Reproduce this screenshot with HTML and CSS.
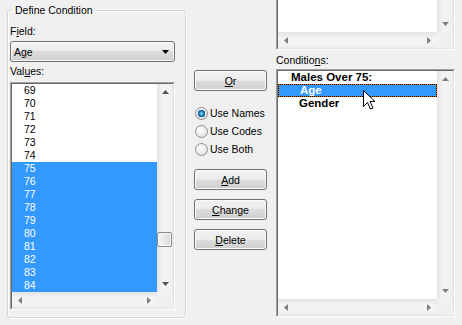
FILE: index.html
```html
<!DOCTYPE html>
<html lang="en">
<head>
    <meta charset="UTF-8">
    <title>Define Condition</title>
    <link rel="stylesheet" href="styles.css">
</head>
<body>
    <div class="dialog">
        <fieldset class="group">
            <legend>Define Condition</legend>
            <label class="caption">F<u>i</u>eld:</label>
            <div class="combo">
                <span>Age</span>
                <svg class="arrow" width="7" height="4"><path d="M0 0h7L3.5 4z" fill="#000"/></svg>
            </div>
            <label class="caption caption-values">Val<u>u</u>es:</label>
            <div class="listbox values">
                <div class="lb-inner">
                    <div class="rows">
                        <div class="row">69</div>
                        <div class="row">70</div>
                        <div class="row">71</div>
                        <div class="row">72</div>
                        <div class="row">73</div>
                        <div class="row">74</div>
                        <div class="row sel">75</div>
                        <div class="row sel">76</div>
                        <div class="row sel">77</div>
                        <div class="row sel">78</div>
                        <div class="row sel">79</div>
                        <div class="row sel">80</div>
                        <div class="row sel">81</div>
                        <div class="row sel">82</div>
                        <div class="row sel">83</div>
                        <div class="row sel">84</div>
                    </div>
                    <div class="vscroll">
                        <div class="sb-btn"><svg width="7" height="4"><path d="M0 4h7L3.5 0z" fill="#505050"/></svg></div>
                        <div class="track"><div class="thumb"></div></div>
                        <div class="sb-btn"><svg width="7" height="4"><path d="M0 0h7L3.5 4z" fill="#505050"/></svg></div>
                    </div>
                    <div class="hscroll">
                        <div class="sb-btn"><svg width="4" height="7"><path d="M4 0v7L0 3.5z" fill="#808080"/></svg></div>
                        <div class="track"></div>
                        <div class="sb-btn"><svg width="4" height="7"><path d="M0 0v7L4 3.5z" fill="#808080"/></svg></div>
                    </div>
                    <div class="corner"></div>
                </div>
            </div>
        </fieldset>

        <div class="actions">
            <button class="btn"><u>O</u>r</button>
            <div class="radios">
                <label class="radio"><span class="radio-dot checked"></span>Use Names</label>
                <label class="radio"><span class="radio-dot"></span>Use Codes</label>
                <label class="radio"><span class="radio-dot"></span>Use Both</label>
            </div>
            <button class="btn btn-add"><u>A</u>dd</button>
            <button class="btn btn-next"><u>C</u>hange</button>
            <button class="btn btn-next"><u>D</u>elete</button>
        </div>

        <div class="side">
            <div class="listbox top-box">
                <div class="lb-inner">
                    <div class="rows"></div>
                    <div class="vscroll">
                        <div class="track"></div>
                        <div class="sb-btn"><svg width="7" height="4"><path d="M0 0h7L3.5 4z" fill="#808080"/></svg></div>
                    </div>
                    <div class="hscroll">
                        <div class="sb-btn"><svg width="4" height="7"><path d="M4 0v7L0 3.5z" fill="#808080"/></svg></div>
                        <div class="track"></div>
                        <div class="sb-btn"><svg width="4" height="7"><path d="M0 0v7L4 3.5z" fill="#808080"/></svg></div>
                    </div>
                    <div class="corner"></div>
                </div>
            </div>

            <label class="caption caption-cond">Conditio<u>n</u>s:</label>
            <div class="listbox conditions">
                <div class="lb-inner">
                    <div class="rows">
                        <div class="tree-row">Males Over 75:</div>
                        <div class="tree-row child sel">Age</div>
                        <div class="tree-row child">Gender</div>
                    </div>
                    <div class="vscroll">
                        <div class="sb-btn"><svg width="7" height="4"><path d="M0 4h7L3.5 0z" fill="#808080"/></svg></div>
                        <div class="track"></div>
                        <div class="sb-btn"><svg width="7" height="4"><path d="M0 0h7L3.5 4z" fill="#808080"/></svg></div>
                    </div>
                    <div class="hscroll">
                        <div class="sb-btn"><svg width="4" height="7"><path d="M4 0v7L0 3.5z" fill="#808080"/></svg></div>
                        <div class="track"></div>
                        <div class="sb-btn"><svg width="4" height="7"><path d="M0 0v7L4 3.5z" fill="#808080"/></svg></div>
                    </div>
                    <div class="corner"></div>
                </div>
                <!-- mouse pointer over the tree -->
                <svg class="pointer" width="13" height="20" viewBox="0 0 13 20">
                    <path d="M0.5 0.5V16.5L4.5 12.5L7.5 19L10 18L7 11.5H12Z" fill="#fff" stroke="#000" stroke-width="1" stroke-linejoin="miter"/>
                </svg>
            </div>
        </div>
    </div>
</body>
</html>
```

FILE: styles.css
```css
* {
    box-sizing: border-box;
}
body {
    margin: 0;
    background: #f0f0f0;
    font-family: "Liberation Sans", Arial, sans-serif;
    font-size: 10.5px;
    color: #000;
}
.dialog {
    display: flex;
    align-items: flex-start;
    height: 325px;
    padding-left: 7px;
    overflow: hidden;
}

/* group box */
.group {
    margin: 4px 0 0;
    padding: 8px 10px 7px 2px;
    width: 179px;
    min-width: 0;
    border: 1px solid #d5d5d5;
    border-radius: 3px;
    box-shadow: inset 1px 1px #fff, 1px 1px #fff;
}
.group legend {
    margin-left: 2px;
    padding: 0 3px;
    line-height: 13px;
}
.caption {
    display: block;
    line-height: 13px;
}
.caption-values {
    margin-top: 3px;
}

.combo {
    margin-top: 3px;
    height: 21px;
    display: flex;
    align-items: center;
    justify-content: space-between;
    padding: 0 5px 0 3px;
    border: 1px solid #707070;
    border-radius: 3px;
    background: linear-gradient(#f2f2f2, #ebebeb 50%, #dddddd 50%, #cfcfcf);
    box-shadow: inset 0 0 0 1px #fafafa;
}

/* list boxes */
.listbox {
    position: relative;
    border: 1px solid;
    border-color: #a0a0a0 #fff #fff #a0a0a0;
}
.lb-inner {
    height: 100%;
    display: grid;
    grid-template-columns: 1fr 16px;
    grid-template-rows: 1fr 16px;
    border: 1px solid;
    border-color: #696969 #e3e3e3 #e3e3e3 #696969;
    background: #fff;
}
.values {
    margin-top: 4px;
    height: 228px;
}
.rows {
    overflow: hidden;
    min-width: 0;
}
.row {
    height: 13px;
    line-height: 13px;
    padding-left: 12px;
    white-space: nowrap;
}
.row.sel {
    background: #3399ff;
    color: #fff;
}

.vscroll {
    display: flex;
    flex-direction: column;
    background: linear-gradient(to right, #e4e4e4, #f3f3f3 35%, #f3f3f3 80%, #eaeaea);
}
.hscroll {
    display: flex;
    background: linear-gradient(#e4e4e4, #f3f3f3 35%, #f3f3f3 80%, #eaeaea);
}
.sb-btn {
    flex: none;
    width: 16px;
    height: 16px;
    display: flex;
    align-items: center;
    justify-content: center;
}
.track {
    flex: 1;
}
.thumb {
    margin-top: 132px;
    width: 15px;
    height: 15px;
    border: 1px solid #8a8a8a;
    border-radius: 2px;
    background: linear-gradient(to right, #f6f6f6, #e9e9e9 50%, #d9d9d9);
    box-shadow: inset 0 0 0 1px #fbfbfb;
}
.corner {
    background: #f0f0f0;
}

/* middle buttons */
.actions {
    margin-left: 8px;
    width: 73px;
    padding-top: 70px;
}
.btn {
    display: block;
    width: 73px;
    height: 21px;
    padding: 0;
    border: 1px solid #707070;
    border-radius: 3px;
    background: linear-gradient(#f2f2f2, #ebebeb 50%, #dddddd 50%, #cfcfcf);
    box-shadow: inset 0 0 0 1px #fcfcfc;
    font: inherit;
    color: #000;
}
.btn-add {
    margin-top: 11px;
}
.btn-next {
    margin-top: 9px;
}
.radios {
    margin-top: 13px;
}
.radio {
    display: flex;
    align-items: center;
    gap: 2px;
    height: 18px;
    padding-left: 1px;
}
.radio-dot {
    width: 13px;
    height: 13px;
    border-radius: 50%;
    border: 1px solid #8e8f8f;
    background: radial-gradient(circle at 40% 35%, #fff, #ececec 50%, #d4d4d4);
}
.radio-dot.checked {
    background:
        radial-gradient(circle at 50% 50%, #9fe3ff 0, #2b8cc8 2px, #164f7e 3.5px, transparent 4px),
        radial-gradient(circle at 40% 35%, #fff, #ececec 50%, #d4d4d4);
}

/* right column */
.side {
    margin-left: 9px;
    width: 179px;
}
.top-box {
    height: 50px;
    border-top: none;
}
.top-box .lb-inner {
    border-top: none;
}
.caption-cond {
    margin-top: 4px;
}
.conditions {
    margin-top: 2px;
    height: 248px;
}
.tree-row {
    height: 13px;
    line-height: 13px;
    padding-left: 13px;
    font-weight: bold;
    font-size: 11.5px;
    white-space: nowrap;
}
.tree-row.child {
    padding-left: 21px;
}
.tree-row.sel {
    background: #3399ff;
    color: #fff;
    border: 1px solid #c86a00;
    outline: 1px dotted #000;
    outline-offset: -1px;
    line-height: 11px;
}
.pointer {
    position: absolute;
    left: 86px;
    top: 20px;
}
```
